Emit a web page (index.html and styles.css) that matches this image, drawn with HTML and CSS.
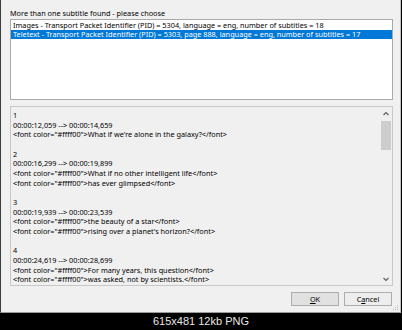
FILE: index.html
```html
<!DOCTYPE html>
<html>
	<head>
		<meta http-equiv="Content-Type" content="text/html; charset=UTF-8">
		<title>Choose subtitle</title>
		<link rel="stylesheet" href="styles.css">
	</head>
	<body>
		<div class="win">
			<div class="win-label">More than one subtitle found - please choose</div>
			<div class="win-list">
				<div class="win-list-item">Images - Transport Packet Identifier (PID) = 5304, language = eng, number of subtitles = 18</div>
				<div class="win-list-item win-list-item-sel">Teletext - Transport Packet Identifier (PID) = 5303, page 888, language = eng, number of subtitles = 17</div>
			</div>
			<div class="win-text">
				<div class="win-text-body">1
00:00:12,059 --&gt; 00:00:14,659
&lt;font color="#ffff00"&gt;What if we're alone in the galaxy?&lt;/font&gt;

2
00:00:16,299 --&gt; 00:00:19,899
&lt;font color="#ffff00"&gt;What if no other intelligent life&lt;/font&gt;
&lt;font color="#ffff00"&gt;has ever glimpsed&lt;/font&gt;

3
00:00:19,939 --&gt; 00:00:23,539
&lt;font color="#ffff00"&gt;the beauty of a star&lt;/font&gt;
&lt;font color="#ffff00"&gt;rising over a planet's horizon?&lt;/font&gt;

4
00:00:24,619 --&gt; 00:00:28,699
&lt;font color="#ffff00"&gt;For many years, this question&lt;/font&gt;
&lt;font color="#ffff00"&gt;was asked, not by scientists.&lt;/font&gt;</div>
				<div class="win-scroll">
					<svg class="win-scroll-arrow" width="12" height="12" viewBox="0 0 12 12"><path d="M3.5 7 L6 4.5 L8.5 7" fill="none" stroke="#606060" stroke-width="1.2"/></svg>
					<div class="win-scroll-track"><div class="win-scroll-thumb"></div></div>
					<svg class="win-scroll-arrow" width="12" height="12" viewBox="0 0 12 12"><path d="M3.5 5 L6 7.5 L8.5 5" fill="none" stroke="#606060" stroke-width="1.2"/></svg>
				</div>
			</div>
			<div class="win-ctrl">
				<div class="win-btn win-btn-def"><u>O</u>K</div>
				<div class="win-btn">C<u>a</u>ncel</div>
			</div>
			<svg class="win-grip" width="6" height="6" viewBox="0 0 6 6">
				<rect x="4" y="0" width="1" height="1" fill="#b8b8b8"/>
				<rect x="2" y="2" width="1" height="1" fill="#b8b8b8"/>
				<rect x="4" y="2" width="1" height="1" fill="#b8b8b8"/>
				<rect x="0" y="4" width="1" height="1" fill="#b8b8b8"/>
				<rect x="2" y="4" width="1" height="1" fill="#b8b8b8"/>
				<rect x="4" y="4" width="1" height="1" fill="#b8b8b8"/>
			</svg>
		</div>
		<div class="caption">615x481 12kb PNG</div>
	</body>
</html>
```
FILE: styles.css
```css
body{margin: 0px; background: #000000; font-family: "Noto Sans", "Liberation Sans", sans-serif; font-size: 7.3px; color: #000000;}
.win{position: relative; display: flex; flex-direction: column; box-sizing: border-box; width: 401px; height: 313px; padding: 8px 7px 0px 9px; background: #f0f0f0; border-left: 1px solid #3c3c3c; border-right: 1px solid #c4c4c4; border-bottom: 1px solid #9a9a9a;}
.win-label{height: 11px; line-height: 11px;}
.win-list{box-sizing: border-box; height: 81px; padding-top: 1px; background: #ffffff; border: 1px solid #a9a9a9;}
.win-list-item{height: 9px; line-height: 9px; padding-left: 2px; white-space: nowrap;}
.win-list-item-sel{background: #0078d7; color: #ffffff;}
.win-text{display: flex; box-sizing: border-box; height: 180px; margin-top: 6px; background: #f0f0f0; border: 1px solid #c8c8c8;}
.win-text-body{flex: 1; padding: 4px 0px 0px 2px; white-space: pre; line-height: 9.66px;}
.win-scroll{display: flex; flex-direction: column; width: 12px; background: #f0f0f0;}
.win-scroll-arrow{display: block; flex: none; margin-top: 1px;}
.win-scroll-track{flex: 1; padding: 1px 1px 0px 1px;}
.win-scroll-thumb{height: 29px; background: #cdcdcd;}
.win-ctrl{display: flex; justify-content: flex-end; gap: 5px; margin-top: 6px; padding-right: 1px;}
.win-btn{box-sizing: border-box; width: 48px; height: 14px; line-height: 12px; text-align: center; background: #ededed; border: 1px solid #adadad;}
.win-btn-def{background: #e1e1e1;}
.win-grip{position: absolute; right: 1px; bottom: 1px;}
.caption{height: 17px; line-height: 17px; text-align: center; font-family: "Liberation Sans", Arial, sans-serif; font-size: 11px; color: #e6e6e6;}
```
